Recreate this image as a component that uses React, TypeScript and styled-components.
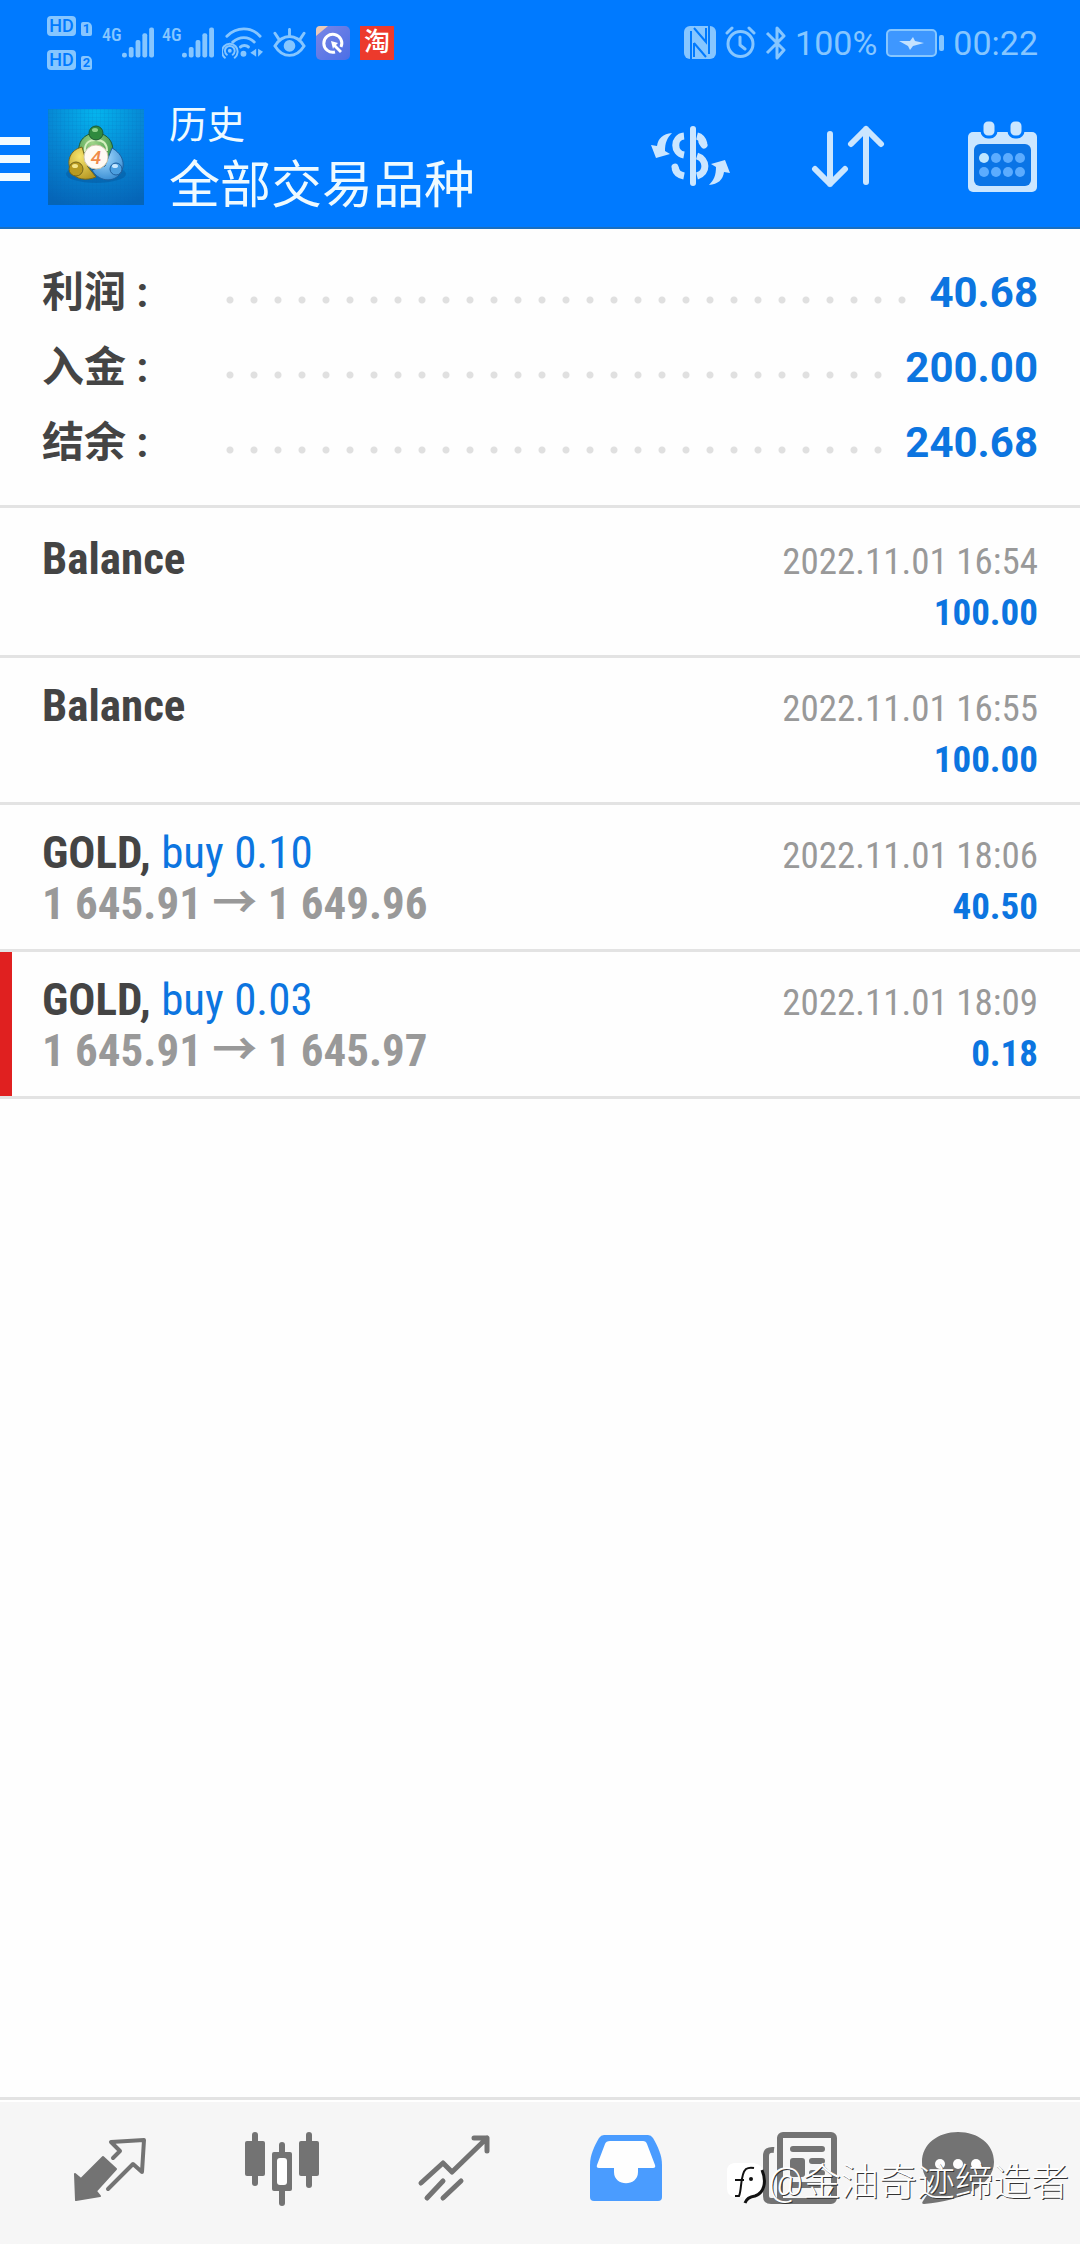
import React from "react";
import styled, { createGlobalStyle } from "styled-components";

const BLUE = "#007aff";
const STATUS = "#86c6ff";
const TOOL = "#cbe6ff";
const NAV = "#737373";
const VALUE = "#0c75e0";
const sans = `Roboto, "Noto Sans CJK SC", sans-serif`;
const condensed = `"Roboto Condensed", "Noto Sans CJK SC", sans-serif`;

const GlobalStyle = createGlobalStyle`
  *, *::before, *::after { box-sizing: border-box; }
  body { margin: 0; background: #fefefe; font-family: ${sans}; }
  ul, dl, dd, h1, p { margin: 0; padding: 0; }
  button { margin: 0; padding: 0; border: 0; background: none; font: inherit; cursor: pointer; }
  svg { display: block; flex: none; }
`;

const Page = styled.div`
  display: flex;
  flex-direction: column;
  min-height: 100vh;
`;

const Header = styled.header`
  background: ${BLUE};
  border-bottom: 2px solid #1a6fc0;
`;

const StatusBar = styled.div`
  display: flex;
  justify-content: space-between;
  align-items: center;
  height: 85px;
  padding: 0 42px 0 47px;
  color: ${STATUS};
`;

const StatusGroup = styled.div<{ $gap: number }>`
  display: flex;
  align-items: center;
  gap: ${(p) => p.$gap}px;
`;

const StatusText = styled.span`
  font-size: 34px;
  line-height: 40px;
`;

const HdStack = styled.div`
  display: flex;
  flex-direction: column;
  gap: 14px;
`;

const HdLine = styled.div`
  display: flex;
  align-items: flex-end;
  gap: 5px;
`;

const HdBadge = styled.span`
  width: 29px;
  height: 20px;
  border-radius: 4px;
  background: ${STATUS};
  color: ${BLUE};
  font-size: 18px;
  font-weight: 500;
  line-height: 20px;
  text-align: center;
`;

const SimBadge = styled.span`
  width: 11px;
  height: 14px;
  border-radius: 2px 5px 2px 2px;
  background: ${STATUS};
  color: ${BLUE};
  font-size: 13px;
  font-weight: 700;
  line-height: 14px;
  text-align: center;
`;

const Signal = styled.div`
  display: flex;
  align-items: flex-start;
  justify-content: space-between;
  width: 50px;
  height: 32px;
`;

const SignalLabel = styled.span`
  font-family: ${condensed};
  font-size: 18px;
  font-weight: 500;
  line-height: 16px;
`;

const TaoBadge = styled.span`
  width: 34px;
  height: 34px;
  background: #ec3a2c;
  color: #fff;
  font-size: 26px;
  font-weight: 500;
  line-height: 32px;
  text-align: center;
`;

const AppBar = styled.div`
  display: flex;
  align-items: center;
  height: 142px;
  padding: 2px 42px 0 0;
`;

const MenuButton = styled.button`
  display: flex;
  flex-direction: column;
  gap: 10px;
  width: 30px;
  margin-right: 18px;
  padding-top: 4px;
`;

const MenuLine = styled.span`
  height: 8px;
  background: #f2fbff;
`;

const Titles = styled.div`
  flex: 1;
  margin-left: 25px;
  padding-top: 4px;
  color: #eefaff;
`;

const Title = styled.h1`
  font-size: 38px;
  font-weight: 400;
  line-height: 54px;
`;

const Subtitle = styled.p`
  font-size: 51px;
  line-height: 68px;
`;

const Actions = styled.div`
  display: flex;
  align-items: center;
  gap: 81px;
`;

const Main = styled.main`
  flex: 1;
`;

const Summary = styled.dl`
  padding: 26px 42px 25px;
  border-bottom: 3px solid #e3e3e3;
`;

const SummaryRow = styled.div`
  display: flex;
  align-items: center;
  height: 75px;
`;

const SummaryLabel = styled.dt`
  width: 176px;
  color: #444;
  font-size: 42px;
  font-weight: 700;
  line-height: 50px;
`;

const Leader = styled.span`
  flex: 1;
  align-self: stretch;
  margin-right: 12px;
  background: radial-gradient(circle, #e0e0e0 3px, transparent 4px) 0 41px / 24px 8px repeat-x;
`;

const SummaryValue = styled.dd`
  color: ${VALUE};
  font-size: 42px;
  font-weight: 700;
  line-height: 50px;
`;

const Deals = styled.ul`
  padding-top: 3px;
  list-style: none;
`;

const Deal = styled.li`
  border-bottom: 3px solid #e3e3e3;
`;

const DealBody = styled.div<{ $marked: boolean }>`
  display: flex;
  flex-direction: column;
  height: 144px;
  padding: 22px 42px 20px 30px;
  border-left: 12px solid ${(p) => (p.$marked ? "#e02020" : "transparent")};
  font-family: ${condensed};
`;

const DealLine = styled.div`
  display: flex;
  justify-content: space-between;
  align-items: baseline;
  height: 51px;
  line-height: 51px;
`;

const Symbol = styled.span`
  color: #444;
  font-size: 45px;
  font-weight: 700;
`;

const Side = styled.span`
  color: ${VALUE};
  font-weight: 400;
`;

const Prices = styled.span`
  color: #999;
  font-size: 45px;
  font-weight: 700;

  &:empty::before {
    content: "\\200b";
  }
`;

const Time = styled.time`
  color: #999;
  font-size: 37px;
`;

const Amount = styled.span`
  color: ${VALUE};
  font-size: 37px;
  font-weight: 700;
`;

const Nav = styled.nav`
  position: relative;
  display: grid;
  grid-template-columns: repeat(5, 172fr) 148fr;
  height: 147px;
  padding: 0 48px 6px 24px;
  border-top: 3px solid #e3e3e3;
  background: #f6f6f6;
  box-shadow: inset 0 2px #fff;
`;

const NavButton = styled.button<{ $active?: boolean }>`
  display: flex;
  align-items: center;
  justify-content: center;
  color: ${(p) => (p.$active ? "#4a9cff" : NAV)};
`;

const Watermark = styled.div`
  position: absolute;
  right: 11px;
  bottom: 36px;
  display: flex;
  align-items: center;
  gap: 2px;
  color: #fff;
  font-size: 38px;
  font-weight: 300;
  line-height: 52px;
  text-shadow: 1px 1px 0 #333;
  white-space: nowrap;
  pointer-events: none;
`;

const SignalBars = () => (
  <svg width="32" height="32" viewBox="0 0 33 32" fill={STATUS}>
    <rect x="0" y="26" width="5" height="5" rx="2" />
    <rect x="7" y="20" width="5" height="11" rx="2" />
    <rect x="14" y="13" width="5" height="18" rx="2" />
    <rect x="21" y="6" width="5" height="25" rx="2" />
    <rect x="28" y="0" width="5" height="31" rx="2" />
  </svg>
);

const WifiIcon = () => (
  <svg width="41" height="32" viewBox="0 0 42 32" fill="none" stroke={STATUS} strokeWidth="3" strokeLinecap="round">
    <path d="M5 9C15 -1 30 -1 39 9M11 15C18 9 27 9 33 15M19 20C21 18 25 18 27 20" />
    <circle cx="22" cy="27" r="3" fill={STATUS} stroke="none" />
    <circle cx="8" cy="24" r="2" fill={STATUS} stroke="none" />
    <path strokeWidth="2" d="M5 28a5 5 0 1 1 6 0M3 31a8 8 0 1 1 10 0" />
    <path d="M35 22v8l-6-4zM37 22v8l5-5z" fill={STATUS} stroke="none" />
  </svg>
);

const EyeIcon = () => (
  <svg width="33" height="30" viewBox="0 0 34 30" fill="none" stroke={STATUS} strokeWidth="3" strokeLinecap="round">
    <path d="M2 18C10 5 24 5 32 18C24 31 10 31 2 18Z" />
    <circle cx="17" cy="18" r="6" fill={STATUS} stroke="none" />
    <path d="M17 1v6M2 5l4 6M32 5l-4 6" />
  </svg>
);

const BrowserIcon = () => (
  <svg width="34" height="34" viewBox="0 0 34 34">
    <defs>
      <linearGradient id="browser" x1="0" y1="0" x2="1" y2="1">
        <stop offset="0" stopColor="#7a86e6" />
        <stop offset="1" stopColor="#4b6fe6" />
      </linearGradient>
    </defs>
    <rect width="34" height="34" rx="5" fill="url(#browser)" />
    <path d="M0 10V4a4 4 0 0 1 4-4h8z" fill="#e9c9b8" />
    <path d="M25 21A9 9 0 1 0 19 26" fill="none" stroke="#fff" strokeWidth="3" />
    <path d="M15 15l7 2-2 2 6 6-2 2-6-6-1 2z" fill="#fff" />
  </svg>
);

const NfcIcon = () => (
  <svg width="32" height="33" viewBox="0 0 32 33">
    <rect width="32" height="33" rx="6" fill={STATUS} />
    <path d="M7 33V5M25 0V28" stroke={BLUE} strokeWidth="2" />
    <path d="M10 2L22 16V2M10 17V31M22 31L10 17" fill="none" stroke={BLUE} strokeWidth="2" />
  </svg>
);

const AlarmIcon = () => (
  <svg width="31" height="33" viewBox="0 0 31 33" fill="none" stroke={STATUS} strokeWidth="3" strokeLinecap="round" strokeLinejoin="round">
    <circle cx="15.5" cy="18" r="12.5" />
    <path d="M15 11v8l5 4M2 7l5-5M29 7l-5-5" />
  </svg>
);

const BluetoothIcon = () => (
  <svg width="21" height="34" viewBox="0 0 21 34" fill="none" stroke={STATUS} strokeWidth="3" strokeLinejoin="round">
    <path d="M2 7l17 17-7 8V2l7 8L2 27" />
  </svg>
);

const BatteryIcon = () => (
  <svg width="58" height="28" viewBox="0 0 58 28">
    <rect x="1" y="1" width="49" height="26" rx="4" fill="#3e97ff" stroke={STATUS} strokeWidth="2" />
    <rect x="53" y="6" width="5" height="16" rx="2" fill={STATUS} />
    <path d="M13 12l11 0 3-4 2 4 9 2-11 3-3 4-2-4z" fill="#c4e2ff" />
  </svg>
);

const LogoIcon = () => (
  <svg width="96" height="96" viewBox="0 0 96 96" fontFamily="Roboto, sans-serif">
    <defs>
      <radialGradient id="sky" cx="0.5" cy="0.05" r="1">
        <stop offset="0" stopColor="#04b4ee" />
        <stop offset="0.5" stopColor="#0787d3" />
        <stop offset="1" stopColor="#0565b8" />
      </radialGradient>
      <radialGradient id="green" cx="0.4" cy="0.3" r="0.8">
        <stop offset="0" stopColor="#a0d488" />
        <stop offset="1" stopColor="#2b8a3c" />
      </radialGradient>
      <radialGradient id="gold" cx="0.4" cy="0.3" r="0.8">
        <stop offset="0" stopColor="#f6e46c" />
        <stop offset="1" stopColor="#b39420" />
      </radialGradient>
      <radialGradient id="azure" cx="0.4" cy="0.3" r="0.8">
        <stop offset="0" stopColor="#a4dbff" />
        <stop offset="1" stopColor="#2f86cf" />
      </radialGradient>
      <pattern id="mesh" width="4" height="4" patternUnits="userSpaceOnUse">
        <path d="M0 0H4M0 0V4" stroke="#0a5fae" strokeOpacity="0.2" />
      </pattern>
    </defs>
    <rect width="96" height="96" fill="url(#sky)" />
    <rect width="96" height="96" fill="url(#mesh)" />
    <ellipse cx="48" cy="65" rx="30" ry="9" fill="#064b8c" opacity="0.35" />
    <path d="M31 45C29 30 39 24 48 24S68 31 64 48L56 57 34 42Z" fill="url(#green)" stroke="#1d5a34" />
    <path d="M34 38C22 41 18 52 23 62C27 71 39 72 48 68L40 58Z" fill="url(#gold)" stroke="#75661c" />
    <path d="M64 39C75 45 79 57 71 66C64 74 50 72 44 61L57 57Z" fill="url(#azure)" stroke="#1f5f9e" />
    <path d="M37 43C36 34 41 31 48 31S59 35 59 42" fill="none" stroke="#d6f0c0" strokeWidth="2" />
    <circle cx="48" cy="24" r="7" fill="#2f8a3e" stroke="#1d5a34" />
    <ellipse cx="47" cy="21" rx="3" ry="2" fill="#8fd08a" />
    <circle cx="28" cy="60" r="7" fill="#b89a20" stroke="#75661c" />
    <ellipse cx="27" cy="57" rx="3" ry="2" fill="#f4e68a" />
    <circle cx="68" cy="60" r="6" fill="#4c9fe0" stroke="#1f5f9e" />
    <ellipse cx="67" cy="57" rx="3" ry="2" fill="#c8e8ff" />
    <circle cx="48" cy="48" r="12" fill="#fffaf4" stroke="#cfc6ac" />
    <text x="48" y="55" textAnchor="middle" fontSize="19" fontStyle="italic" fontWeight="500" fill="#ef8a4a">4</text>
  </svg>
);

const CurrencyIcon = () => (
  <svg width="79" height="62" viewBox="0 0 79 62" fill="none" stroke={TOOL} strokeWidth="7">
    <path d="M42 3v54" strokeWidth="6" strokeLinecap="round" />
    <path d="M33 10C22 11 22 27 33 29M46 30C56 33 57 47 46 50" />
    <path d="M46 10C50 11 52 14 53 18M24 42C25 47 28 49 33 50" />
    <path d="M51 16l2 3M24 41l1 3" strokeLinecap="round" />
    <path id="swap" d="M21 7C12 8 7 12 6 20L0 19 5 32 19 28 14 25C14 17 16 12 21 7Z" fill={TOOL} stroke="none" />
    <use href="#swap" transform="rotate(180 39.5 33)" />
  </svg>
);

const SortIcon = () => (
  <svg width="76" height="64" viewBox="0 0 76 64" fill="none" stroke={TOOL} strokeWidth="6" strokeLinecap="round" strokeLinejoin="round">
    <path d="M19 9v50M4 44l15 15 15-15M55 57V4M40 19L55 4l15 15" />
  </svg>
);

const CalendarIcon = () => (
  <svg width="70" height="72" viewBox="0 0 70 72">
    <rect y="11" width="69" height="60" rx="5" fill={TOOL} />
    <rect x="6" y="23" width="57" height="42" rx="6" fill="#0a74e6" />
    {[15, 42].map((x) => (
      <rect key={x} x={x - 1} y="-1" width="14" height="17" rx="6" fill={TOOL} stroke={BLUE} strokeWidth="3" />
    ))}
    {[16, 28, 40, 52].map((x, i) => (
      <g key={x} fill="#5cacff">
        <circle cx={x} cy="37" r="5" fill={i === 0 ? "#bfe6ff" : undefined} />
        <circle cx={x} cy="51" r="5" />
      </g>
    ))}
  </svg>
);

const NavIcon = ({ children }: { children: React.ReactNode }) => (
  <svg width="80" height="80" viewBox="0 0 80 80" fill="currentColor" strokeLinecap="round" strokeLinejoin="round">
    {children}
  </svg>
);

const QuotesIcon = () => (
  <NavIcon>
    <path d="M33 28L46 40 26 62 30 67 6 71 5 45 11 50Z" stroke="currentColor" strokeWidth="2" />
    <path d="M43 29L50 22 41 13 74 11 72 43 63 35 38 60" fill="none" stroke="currentColor" strokeWidth="4" />
  </NavIcon>
);

const ChartsIcon = () => (
  <NavIcon>
    <rect x="3" y="12" width="20" height="35" rx="2" />
    <rect x="10" y="3" width="6" height="54" rx="3" />
    <rect x="37" y="13" width="6" height="64" rx="3" />
    <rect x="30" y="23" width="20" height="39" rx="2" />
    <rect x="35" y="29" width="10" height="27" rx="3" fill="#fefefe" />
    <rect x="57" y="12" width="20" height="35" rx="2" />
    <rect x="64" y="3" width="6" height="56" rx="3" />
  </NavIcon>
);

const TradeIcon = () => (
  <NavIcon>
    <path
      d="M7 54L29 34 38 43 73 9M60 9H73V22M13 69L29 52M29 69L47 52"
      fill="none"
      stroke="currentColor"
      strokeWidth="5"
    />
  </NavIcon>
);

const HistoryIcon = () => (
  <NavIcon>
    <path d="M18 6H62Q65 6 67 9C72 18 76 26 76 36V68Q76 72 72 72H8Q4 72 4 68V36C4 26 8 18 13 9Q15 6 18 6Z" />
    <path
      d="M24 12H57Q60 12 61 15L69 36Q70 39 67 39H52V43C52 58 28 58 28 43V39H13Q10 39 11 36L19 15Q20 12 24 12Z"
      fill="#fefefe"
    />
  </NavIcon>
);

const NewsIcon = () => (
  <NavIcon>
    <g fill="none" stroke="currentColor" strokeWidth="6">
      <rect x="22" y="6" width="54" height="66" rx="3" />
      <path d="M16 21Q8 20 8 27V67Q8 72 13 72H26" strokeLinecap="butt" />
      <path d="M35 20H64M54 32H64M54 44H64M35 56H64" />
    </g>
    <rect x="32" y="29" width="15" height="19" rx="3" />
  </NavIcon>
);

const ChatIcon = () => (
  <NavIcon>
    <path d="M40 3C60 3 76 15 76 33C76 56 44 72 6 75Q3 75 5 72L15 57C8 51 4 43 4 33C4 15 20 3 40 3Z" />
    <g fill="#fefefe">
      <circle cx="22" cy="35" r="5" />
      <circle cx="40" cy="35" r="5" />
      <circle cx="58" cy="35" r="5" />
    </g>
  </NavIcon>
);

const WatermarkLogo = () => (
  <svg width="40" height="44" viewBox="0 0 40 44">
    <path d="M8 3H28Q38 5 38 15V28Q36 37 24 38L19 43 18 37H8Q1 36 1 28V11Q1 4 8 3Z" fill="#fff" />
    <path d="M9 36H13C16 30 14 14 20 9Q23 7 28 8" fill="none" stroke="#111" strokeWidth="2" />
    <path d="M9 20H18" stroke="#111" strokeWidth="2" />
    <path d="M36 10C41 22 38 33 29 36Q21 37 19 43" fill="none" stroke="#111" strokeWidth="3" />
    <circle cx="25" cy="19" r="2" fill="#111" />
  </svg>
);

const summary = [
  ["利润 :", "40.68"],
  ["入金 :", "200.00"],
  ["结余 :", "240.68"],
];

const deals = [
  { name: "Balance", time: "2022.11.01 16:54", amount: "100.00" },
  { name: "Balance", time: "2022.11.01 16:55", amount: "100.00" },
  { name: "GOLD,", side: "buy 0.10", prices: "1 645.91 → 1 649.96", time: "2022.11.01 18:06", amount: "40.50" },
  { name: "GOLD,", side: "buy 0.03", prices: "1 645.91 → 1 645.97", time: "2022.11.01 18:09", amount: "0.18", marked: true },
];

const tabs = [
  { label: "行情", Icon: QuotesIcon },
  { label: "图表", Icon: ChartsIcon },
  { label: "交易", Icon: TradeIcon },
  { label: "历史", Icon: HistoryIcon, active: true },
  { label: "新闻", Icon: NewsIcon },
  { label: "消息", Icon: ChatIcon },
];

export default function App() {
  return (
    <Page>
      <GlobalStyle />
      <Header>
        <StatusBar>
          <StatusGroup $gap={10}>
            <HdStack>
              {["1", "2"].map((sim) => (
                <HdLine key={sim}>
                  <HdBadge>HD</HdBadge>
                  <SimBadge>{sim}</SimBadge>
                </HdLine>
              ))}
            </HdStack>
            {["1", "2"].map((sim) => (
              <Signal key={sim}>
                <SignalLabel>4G</SignalLabel>
                <SignalBars />
              </Signal>
            ))}
            <WifiIcon />
            <EyeIcon />
            <BrowserIcon />
            <TaoBadge>淘</TaoBadge>
          </StatusGroup>
          <StatusGroup $gap={9}>
            <NfcIcon />
            <AlarmIcon />
            <BluetoothIcon />
            <StatusText>100%</StatusText>
            <BatteryIcon />
            <StatusText>00:22</StatusText>
          </StatusGroup>
        </StatusBar>
        <AppBar>
          <MenuButton aria-label="菜单">
            <MenuLine />
            <MenuLine />
            <MenuLine />
          </MenuButton>
          <LogoIcon />
          <Titles>
            <Title>历史</Title>
            <Subtitle>全部交易品种</Subtitle>
          </Titles>
          <Actions>
            <button aria-label="交易品种">
              <CurrencyIcon />
            </button>
            <button aria-label="排序">
              <SortIcon />
            </button>
            <button aria-label="日期">
              <CalendarIcon />
            </button>
          </Actions>
        </AppBar>
      </Header>
      <Main>
        <Summary>
          {summary.map(([label, value]) => (
            <SummaryRow key={label}>
              <SummaryLabel>{label}</SummaryLabel>
              <Leader />
              <SummaryValue>{value}</SummaryValue>
            </SummaryRow>
          ))}
        </Summary>
        <Deals>
          {deals.map((d) => (
            <Deal key={d.time}>
              <DealBody $marked={!!d.marked}>
                <DealLine>
                  <Symbol>
                    {d.name}
                    {d.side && <Side> {d.side}</Side>}
                  </Symbol>
                  <Time>{d.time}</Time>
                </DealLine>
                <DealLine>
                  <Prices>{d.prices}</Prices>
                  <Amount>{d.amount}</Amount>
                </DealLine>
              </DealBody>
            </Deal>
          ))}
        </Deals>
      </Main>
      <Nav>
        {tabs.map(({ label, Icon, active }) => (
          <NavButton key={label} aria-label={label} $active={active}>
            <Icon />
          </NavButton>
        ))}
        <Watermark>
          <WatermarkLogo />
          @金油奇迹缔造者
        </Watermark>
      </Nav>
    </Page>
  );
}
